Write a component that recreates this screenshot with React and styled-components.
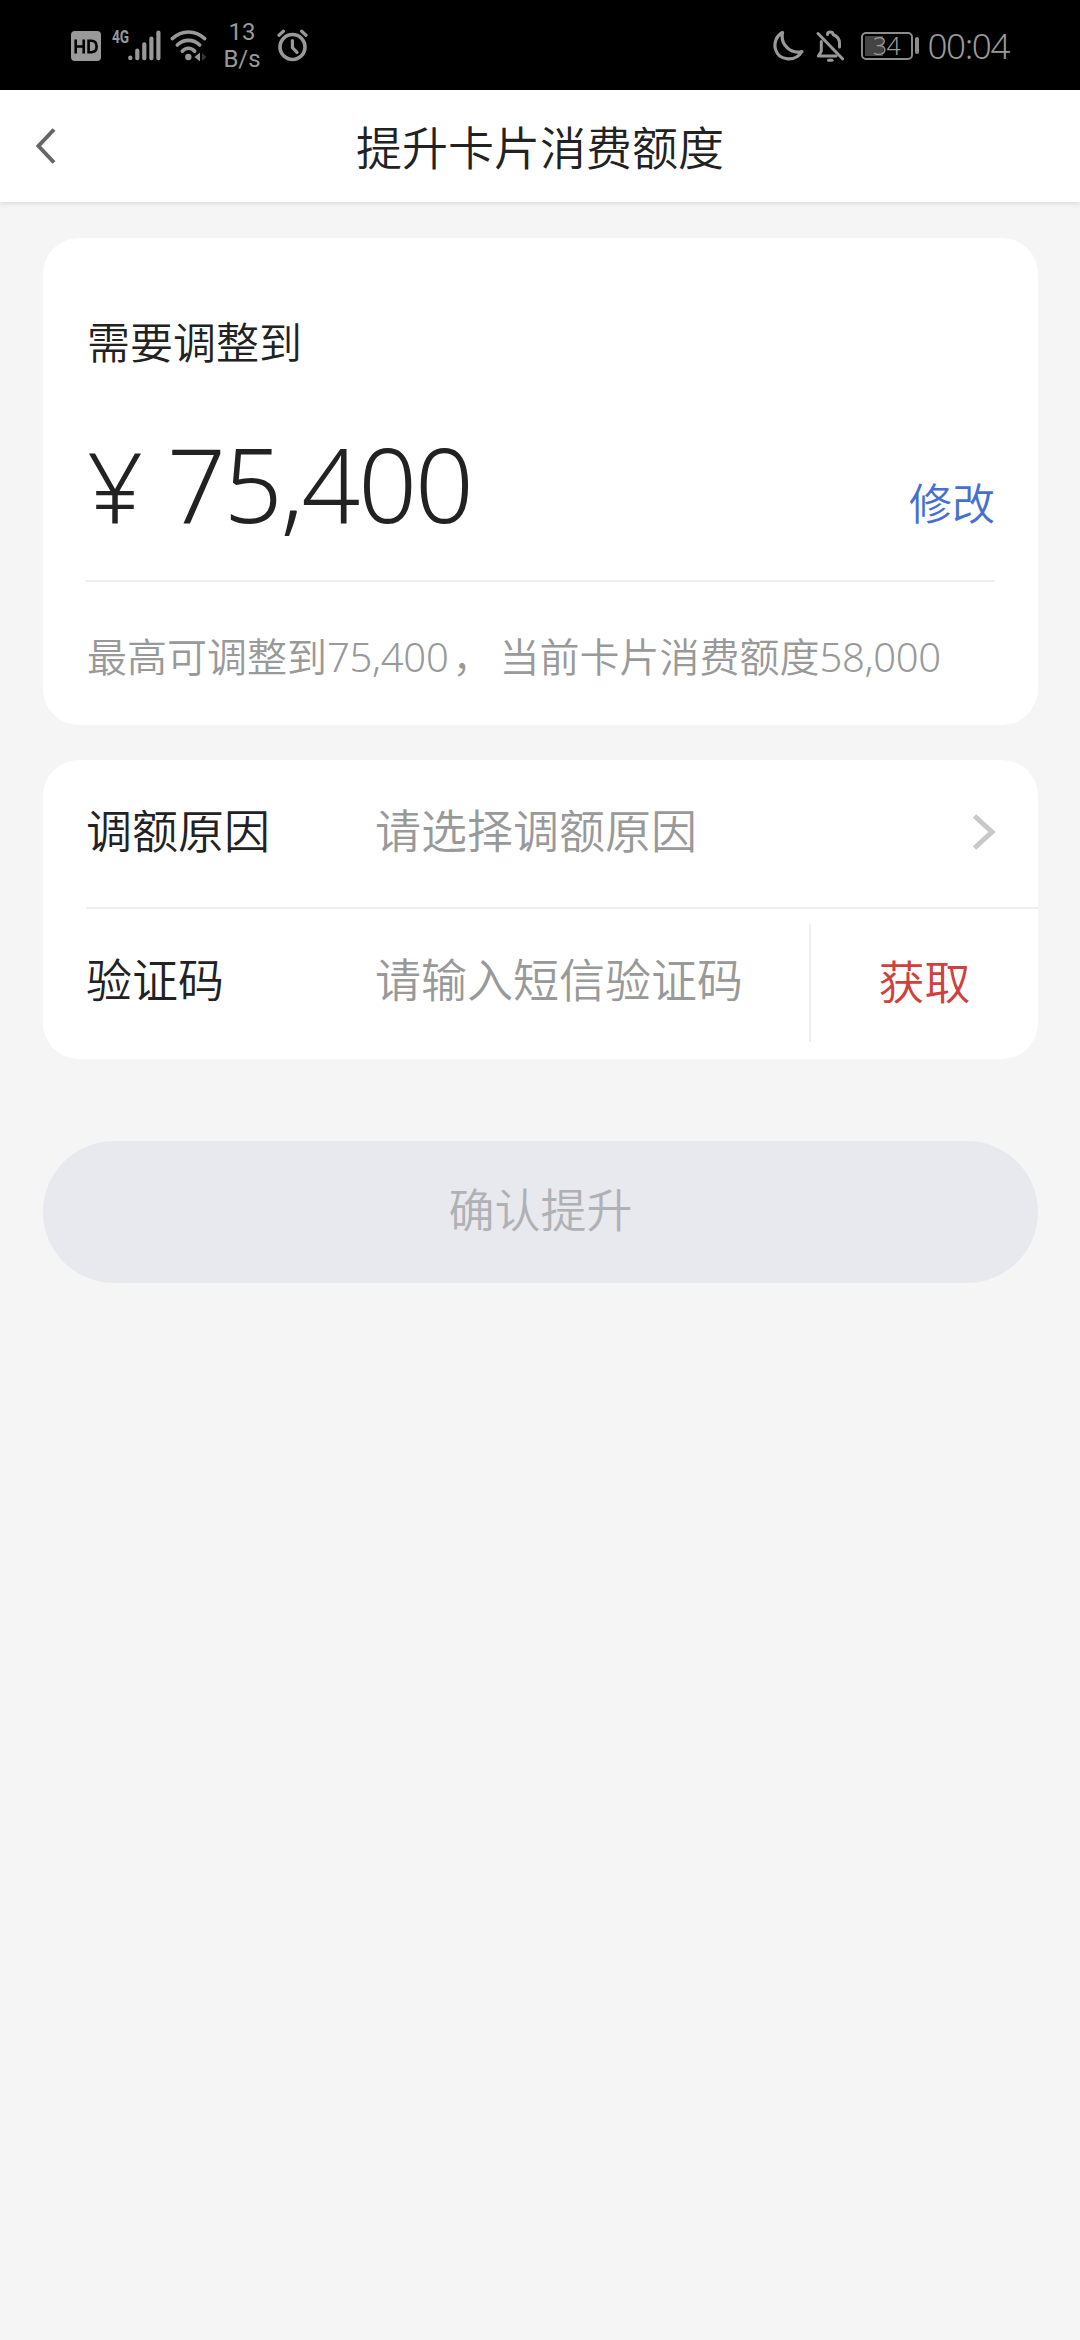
import React from 'react';
import styled, { createGlobalStyle } from 'styled-components';

const GlobalStyle = createGlobalStyle`
  * {
    box-sizing: border-box;
  }

  body {
    margin: 0;
    background: #f5f5f5;
    font-family: "Noto Sans CJK SC", sans-serif;
    font-weight: 350;
    color: #222;
  }

  button, input {
    font: inherit;
    border: none;
    background: none;
    padding: 0;
    outline: none;
  }
`;

const HdIcon = () => (
  <svg width="30" height="30" viewBox="0 0 30 30">
    <rect width="30" height="30" rx="4" fill="#999" />
    <path d="M4.700 8.500v14M12.700 8.500v14M4.700 15.500h8" stroke="#000" strokeWidth="2.600" fill="none" />
    <path d="M17.600 9.800h2.600q5.400 0 5.400 5.700t-5.400 5.700h-2.600z" stroke="#000" strokeWidth="2.600" fill="none" />
  </svg>
);

const SignalIcon = () => (
  <svg width="33" height="31" viewBox="0 0 33 31">
    <g stroke="#999" strokeWidth="4.2" strokeLinecap="round">
      <path d="M2.3 27.6v.6M9.3 20.5v7.7M16.3 14.3v13.9M23.4 8.5v19.7M30.4 2.5v25.7" />
    </g>
  </svg>
);

const WifiIcon = () => (
  <svg width="38" height="31" viewBox="0 0 38 31">
    <g fill="none" stroke="#999" strokeWidth="3.6" strokeLinecap="round">
      <path d="M2.3 8.6Q9.5 2 18.5 2t16.2 6.6" />
      <path d="M7.3 15Q12 10.400 18.500 10.400T29.700 15" />
      <path d="M12.300 21.200Q15 18.200 18.500 18.200T24.700 21.200" />
    </g>
    <circle cx="18.300" cy="27" r="3.200" fill="#999" />
    <path d="M30 22.500v9l-5.500-4.500z" fill="#999" />
    <path d="M32 23v8l4.500-4z" fill="#333" />
  </svg>
);

const AlarmIcon = () => (
  <svg width="31" height="33" viewBox="0 0 31 33">
    <g fill="none" stroke="#999" strokeLinecap="round" strokeLinejoin="round">
      <circle cx="15.500" cy="18" r="12.500" strokeWidth="3.600" />
      <path d="M15.400 11.500v7.200l4.600 4.600" strokeWidth="3.200" />
      <path d="M2 6.200L6.400 2.300M29 6.200l-4.400-3.900" strokeWidth="3.200" />
    </g>
  </svg>
);

const MoonIcon = () => (
  <svg width="32" height="32" viewBox="0 0 32 32">
    <path
      d="M9.500 2.500C3.300 5.800.6 13 2.600 19.600c3.500 11.400 19.800 12.600 26.300 1.900C18.500 24.400 7 15.400 9.500 2.500z"
      fill="none"
      stroke="#999"
      strokeWidth="3.200"
      strokeLinejoin="round"
    />
  </svg>
);

const BellOffIcon = () => (
  <svg width="29" height="32" viewBox="0 0 29 32">
    <g fill="none" stroke="#999" strokeWidth="3" strokeLinecap="round" strokeLinejoin="round">
      <path d="M2 3.500L26.500 28.800" />
      <path d="M5.300 11.500v9.800L2.400 26H20" />
      <path d="M11.500 4.500C11.500 1.300 17 1.300 17 4.500c4 1.600 6.500 4.500 6.500 8.600V17" />
      <path d="M12.500 30.300h3.500" />
    </g>
  </svg>
);

const BackIcon = () => (
  <svg width="22" height="36" viewBox="0 0 22 36">
    <path d="M19 1.500L3.500 18 19 34.500" fill="none" stroke="#666" strokeWidth="4" />
  </svg>
);

const ArrowIcon = () => (
  <ArrowSvg width="24" height="36" viewBox="0 0 24 36">
    <path d="M2.500 2L20 18 2.500 34" fill="none" stroke="#c8c8c8" strokeWidth="5" />
  </ArrowSvg>
);

const App = () => (
  <>
    <GlobalStyle />
    <StatusBar>
      <StatusGroup>
        <HdIcon />
        <Network>4G</Network>
        <SignalIcon />
        <WifiSlot>
          <WifiIcon />
        </WifiSlot>
        <Speed>
          <span>13</span>
          <span>B/s</span>
        </Speed>
        <AlarmIcon />
      </StatusGroup>
      <StatusGroup>
        <MoonIcon />
        <BellSlot>
          <BellOffIcon />
        </BellSlot>
        <Battery>
          <BatteryBody>34</BatteryBody>
          <BatteryTip />
        </Battery>
        <Clock>00:04</Clock>
      </StatusGroup>
    </StatusBar>

    <Header>
      <BackButton aria-label="返回">
        <BackIcon />
      </BackButton>
      <Title>提升卡片消费额度</Title>
    </Header>

    <Content>
      <LimitCard>
        <Caption>需要调整到</Caption>
        <AmountRow>
          <Amount>
            <Currency>¥</Currency>
            <span>75,400</span>
          </Amount>
          <EditButton>修改</EditButton>
        </AmountRow>
        <Hint>
          最高可调整到<Num>75,400</Num><Comma>，</Comma>当前卡片消费额度<Num>58,000</Num>
        </Hint>
      </LimitCard>

      <FormCard>
        <Row>
          <Label>调额原因</Label>
          <Value>请选择调额原因</Value>
          <ArrowIcon />
        </Row>
        <Row $last>
          <Label>验证码</Label>
          <Value>请输入短信验证码</Value>
          <CodeButton>获取</CodeButton>
        </Row>
      </FormCard>

      <SubmitButton disabled>确认提升</SubmitButton>
    </Content>
  </>
);

const StatusBar = styled.div`
  display: flex;
  justify-content: space-between;
  height: 90px;
  padding: 0 71px;
  background: #000;
  color: #999;
`;

const StatusGroup = styled.div`
  display: flex;
  align-items: center;
  height: 91px;

  svg {
    flex: none;
  }
`;

const Network = styled.span`
  width: 17px;
  margin: 0 -1px 18px 11px;
  font: 700 19px/18px "Roboto", sans-serif;
  transform: scaleX(0.72);
  transform-origin: left;
`;

const WifiSlot = styled.div`
  display: flex;
  margin-left: 9px;
`;

const Speed = styled.div`
  display: flex;
  flex-direction: column;
  align-items: center;
  width: 40px;
  margin: 0 15px 0 14px;
  font: 400 24px/27px "Roboto", sans-serif;
`;

const BellSlot = styled.div`
  display: flex;
  margin: 0 16px 0 11px;
`;

const Battery = styled.div`
  display: flex;
  align-items: center;
  gap: 2px;
`;

const BatteryBody = styled.span`
  width: 52px;
  height: 28px;
  border: 2px solid #8c8c8c;
  border-radius: 5px;
  background: linear-gradient(#444, #444) 2px 2px / 18px 20px no-repeat;
  font: 300 25px/23px "Noto Sans", sans-serif;
  letter-spacing: -0.5px;
  text-align: center;
`;

const BatteryTip = styled.span`
  width: 4px;
  height: 17px;
  border-radius: 2px;
  background: #8c8c8c;
`;

const Clock = styled.span`
  margin-left: 9px;
  font: 300 35px/40px "Noto Sans", sans-serif;
  letter-spacing: -1.4px;
`;

const Header = styled.header`
  display: grid;
  grid-template-columns: 100px 1fr 100px;
  align-items: center;
  height: 112px;
  background: #fff;
  box-shadow: 0 1px 6px rgba(0, 0, 0, 0.14);
`;

const BackButton = styled.button`
  display: flex;
  padding-left: 35px;
`;

const Title = styled.h1`
  margin: 0 0 2px;
  font-size: 46px;
  font-weight: 350;
  line-height: 60px;
  text-align: center;
`;

const Content = styled.main`
  display: flex;
  flex-direction: column;
  gap: 35px;
  padding: 36px 42px 0 43px;
`;

const Card = styled.section`
  border-radius: 36px;
  background: #fff;
`;

const LimitCard = styled(Card)`
  height: 487px;
  padding: 72px 43px 0;
`;

const Caption = styled.div`
  padding-left: 1px;
  font-size: 43px;
  line-height: 60px;
`;

const AmountRow = styled.div`
  display: flex;
  justify-content: space-between;
  align-items: flex-end;
  height: 212px;
  border-bottom: 2px solid #eee;
`;

const Amount = styled.div`
  display: flex;
  align-items: baseline;
  padding: 0 0 45px 1px;
  font: 300 103px/100px "Noto Sans", sans-serif;
  letter-spacing: -2.1px;
`;

const Currency = styled.span`
  width: 80px;
  font-size: 98px;
`;

const EditButton = styled.button`
  padding-bottom: 49px;
  font-size: 43px;
  line-height: 60px;
  color: #4670d0;
`;

const Hint = styled.p`
  margin: 43px 0 0;
  padding-left: 1px;
  font-size: 40px;
  line-height: 60px;
  color: #999;
  white-space: nowrap;
`;

const Num = styled.span`
  font-family: "Noto Sans", sans-serif;
  font-weight: 300;
  letter-spacing: -0.3px;
`;

const Comma = styled.span`
  margin: 0 7px 0 4px;
`;

const FormCard = styled(Card)`
  height: 299px;
  padding-left: 43px;
`;

const Row = styled.div`
  display: flex;
  align-items: center;
  height: ${({ $last }) => ($last ? '150px' : '149px')};
  padding-right: ${({ $last }) => ($last ? '0' : '42px')};
  padding-bottom: ${({ $last }) => ($last ? '14px' : '12px')};
  border-bottom: ${({ $last }) => ($last ? 'none' : '2px solid #eee')};
  font-size: 46px;
  line-height: 60px;
`;

const ArrowSvg = styled.svg`
  margin-top: 9px;
`;

const Label = styled.span`
  width: 289px;
`;

const Value = styled.span`
  flex: 1;
  color: #999;
`;

const CodeButton = styled.button`
  width: 229px;
  height: 118px;
  margin-top: 12px;
  padding-bottom: 8px;
  border-left: 2px solid #eee;
  color: #d0403c;
`;

const SubmitButton = styled.button`
  height: 142px;
  margin-top: 47px;
  padding-bottom: 11px;
  border-radius: 71px;
  background: #e8e9ee;
  color: #b0b1b5;
  font-size: 46px;
`;

export default App;
